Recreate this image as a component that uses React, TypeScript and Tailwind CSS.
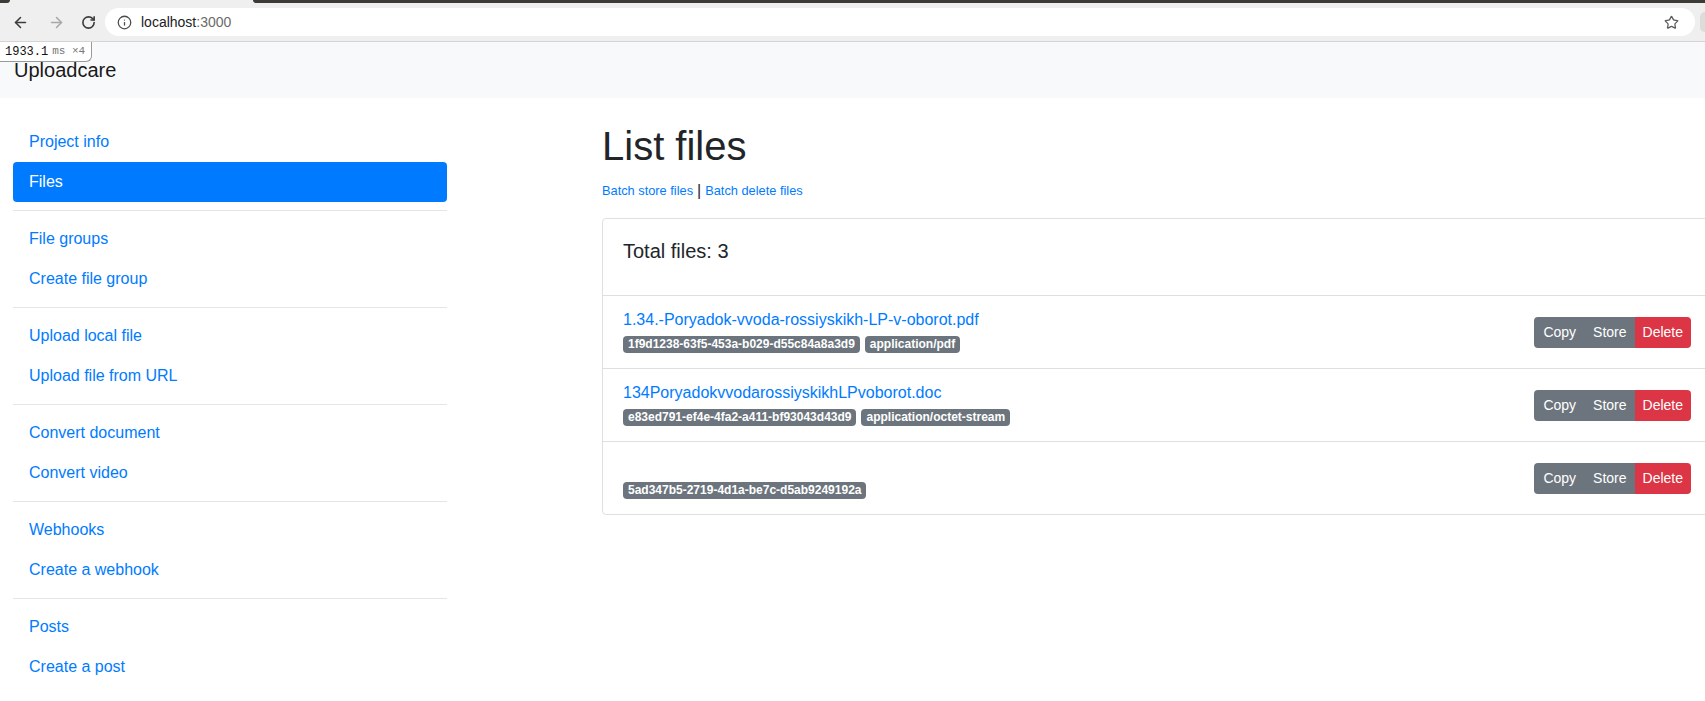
import React from "react";
import { ArrowLeft, ArrowRight, RotateCw, Info, Star } from "lucide-react";

const navGroups: { label: string; active?: boolean }[][] = [
  [{ label: "Project info" }, { label: "Files", active: true }],
  [{ label: "File groups" }, { label: "Create file group" }],
  [{ label: "Upload local file" }, { label: "Upload file from URL" }],
  [{ label: "Convert document" }, { label: "Convert video" }],
  [{ label: "Webhooks" }, { label: "Create a webhook" }],
  [{ label: "Posts" }, { label: "Create a post" }],
];

const files = [
  {
    name: "1.34.-Poryadok-vvoda-rossiyskikh-LP-v-oborot.pdf",
    uuid: "1f9d1238-63f5-453a-b029-d55c84a8a3d9",
    mime: "application/pdf",
  },
  {
    name: "134PoryadokvvodarossiyskikhLPvoborot.doc",
    uuid: "e83ed791-ef4e-4fa2-a411-bf93043d43d9",
    mime: "application/octet-stream",
  },
  {
    name: "",
    uuid: "5ad347b5-2719-4d1a-be7c-d5ab9249192a",
    mime: "",
  },
];

function Badge({ children }: { children: React.ReactNode }) {
  return (
    <span className="inline-block rounded-[4px] bg-[#6c757d] px-[5px] py-[3px] text-[12px] font-bold leading-[11px] text-white">
      {children}
    </span>
  );
}

export default function App() {
  return (
    <div className="h-[701px] w-[1705px] overflow-hidden bg-white font-['Liberation_Sans',Arial,sans-serif] text-[#212529]">
      {/* Browser chrome */}
      <div className="flex h-[3px]">
        <div className="w-[10px] rounded-br-[3px] bg-[#3c3b37]" />
        <div className="w-[243px] bg-[#efefef]" />
        <div className="flex-1 rounded-bl-[3px] bg-[#3c3b37]" />
      </div>
      <div className="flex h-[39px] items-center border-b border-[#d4d4d4] bg-[#efefef]">
        <div className="flex w-[105px] items-center">
          <div className="flex w-[40px] justify-center pl-[1px]">
            <ArrowLeft size={17} strokeWidth={2.2} className="text-[#3c3c3c]" />
          </div>
          <div className="flex w-[32px] justify-center">
            <ArrowRight size={17} strokeWidth={2.2} className="text-[#a8a8a8]" />
          </div>
          <div className="flex w-[32px] justify-center">
            <RotateCw size={15} strokeWidth={2.6} className="text-[#3c3c3c]" />
          </div>
        </div>
        <div className="flex h-[28px] w-[1590px] items-center rounded-full bg-white pl-[12px] pr-[16px]">
          <Info size={15} strokeWidth={2} className="text-[#4a4a4a]" />
          <span className="ml-[9px] text-[14px] leading-none">
            <span className="text-[#202124]">localhost</span>
            <span className="text-[#6b6b6b]">:3000</span>
          </span>
          <div className="flex-1" />
          <Star size={15} strokeWidth={2} className="text-[#5a5a5a]" />
        </div>
        <div className="ml-[5px] h-[20px] w-[5px] rounded-l-full bg-[#dcdcdc]" />
      </div>

      {/* Navbar */}
      <div className="relative flex h-[56px] items-center bg-[#f8f9fa] px-[14px]">
        <span className="text-[20px] leading-[30px] text-[#1a1a1a]">Uploadcare</span>
        <div className="absolute left-0 top-0 flex h-[20px] w-[92px] items-center gap-[4px] rounded-br-[6px] border-b border-r border-[#9a9a9a] bg-white pl-[5px] font-['Liberation_Mono','DejaVu_Sans_Mono',monospace] leading-none">
          <span className="text-[12px] text-[#111]">1933.1</span>
          <span className="text-[11px] text-[#777]">ms ×4</span>
        </div>
      </div>

      {/* Body */}
      <div className="flex pt-[24px]">
        {/* Sidebar */}
        <div className="ml-[13px] w-[434px] shrink-0">
          {navGroups.map((group, gi) => (
            <div key={gi}>
              {gi > 0 && <div className="my-[8px] border-t border-[#e5e5e5]" />}
              {group.map((item) => (
                <div
                  key={item.label}
                  className={
                    item.active
                      ? "rounded-[4px] bg-[#007bff] px-[16px] py-[8px] text-[16px] leading-[24px] text-white"
                      : "px-[16px] py-[8px] text-[16px] leading-[24px] text-[#007bff]"
                  }
                >
                  {item.label}
                </div>
              ))}
            </div>
          ))}
        </div>

        {/* Main */}
        <div className="ml-[155px] w-[1110px] shrink-0">
          <h1 className="mb-[8px] text-[40px] font-normal leading-[48px] text-[#212529]">List files</h1>
          <div className="mb-[16px] flex h-[24px] items-center pt-[1px] text-[16px] leading-[24px]">
            <span className="text-[12.8px] text-[#007bff]">Batch store files</span>
            <span className="mx-[4px] text-[#212529]">|</span>
            <span className="text-[12.8px] text-[#007bff]">Batch delete files</span>
          </div>

          <div className="rounded-[4px] border border-[#dfdfdf]">
            <div className="px-[20px] pb-[32px] pt-[20px]">
              <h5 className="text-[20px] leading-[24px] text-[#212529]">Total files: 3</h5>
            </div>
            {files.map((f) => (
              <div
                key={f.uuid}
                className="flex items-center justify-between border-t border-[#dfdfdf] px-[20px] py-[12px]"
              >
                <div>
                  <div className="h-[24px] text-[16px] leading-[24px] text-[#007bff]">{f.name}</div>
                  <div className="flex h-[24px] items-center gap-[5px]">
                    <Badge>{f.uuid}</Badge>
                    {f.mime && <Badge>{f.mime}</Badge>}
                  </div>
                </div>
                <div className="flex overflow-hidden rounded-[4px] text-[14px] leading-[21px] text-white">
                  <span className="bg-[#6c757d] px-[9px] py-[5px]">Copy</span>
                  <span className="bg-[#6c757d] px-[8px] py-[5px]">Store</span>
                  <span className="bg-[#dc3545] px-[8px] py-[5px]">Delete</span>
                </div>
              </div>
            ))}
          </div>
        </div>
      </div>
    </div>
  );
}
